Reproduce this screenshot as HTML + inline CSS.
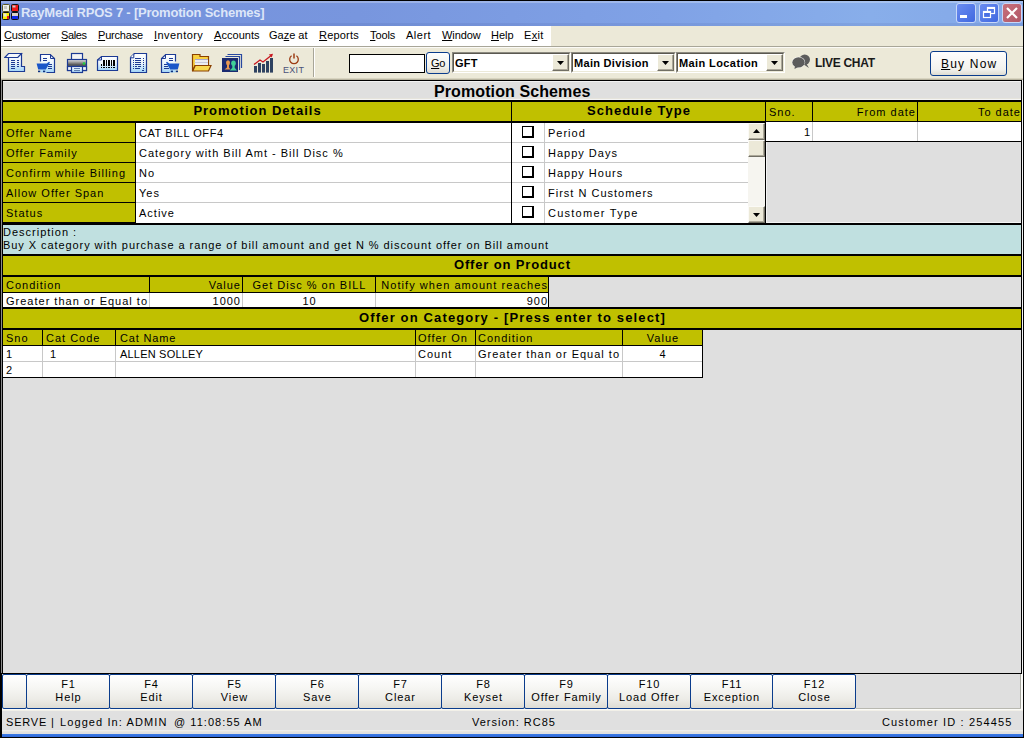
<!DOCTYPE html>
<html><head><meta charset="utf-8">
<style>
*{margin:0;padding:0;box-sizing:border-box}
html,body{width:1024px;height:738px;overflow:hidden;background:#000;font-family:"Liberation Sans",sans-serif;color:#000}
.a{position:absolute}
.t{position:absolute;white-space:nowrap}
u{text-decoration:underline;text-underline-offset:1px}
</style></head><body>
<div class="a" style="left:0px;top:0px;width:1024px;height:738px;background:#000;"></div>
<div class="a" style="left:1px;top:1px;width:1022px;height:25px;background:linear-gradient(90deg,#7490dc 0%,#7896de 35%,#80a2e6 65%,#88aeea 85%,#84a8e8 100%);"></div>
<div class="a" style="left:1px;top:1px;width:1022px;height:2px;background:rgba(255,255,255,0.25);"></div>
<div class="a" style="left:1px;top:23px;width:1022px;height:3px;background:rgba(0,0,60,0.06);"></div>
<svg class="a" style="left:1px;top:3px" width="19" height="18" viewBox="0 0 19 18">
<rect x="1.5" y="1.5" width="7" height="7" rx="1" fill="#f0f0e8" stroke="#5a5620"/><rect x="3" y="3" width="3" height="3" fill="#c8c8c0"/>
<rect x="10.5" y="1.5" width="7" height="7" rx="1" fill="#f01818" stroke="#101010"/><rect x="11.5" y="2.5" width="3" height="2" fill="#c8c8c8"/>
<rect x="1.5" y="9.5" width="7" height="7" rx="1" fill="#f8f000" stroke="#101010"/><rect x="2.5" y="10.5" width="3" height="3" fill="#e8e8e0"/><rect x="6" y="13" width="2" height="3" fill="#e02020"/>
<rect x="10.5" y="9.5" width="7" height="7" rx="1" fill="#1028e8" stroke="#101010"/><rect x="11" y="10" width="6" height="3" fill="#d8d0c8"/>
</svg>
<div class="a" style="left:956px;top:3px;width:20px;height:20px;border:1px solid #c8d8f8;border-radius:3px;background:linear-gradient(135deg,#6a8cf0,#4068e0)"></div>
<div class="a" style="left:979px;top:3px;width:20px;height:20px;border:1px solid #c8d8f8;border-radius:3px;background:linear-gradient(135deg,#6a8cf0,#4068e0)"></div>
<div class="a" style="left:1002px;top:3px;width:20px;height:20px;border:1px solid #c8d8f8;border-radius:3px;background:linear-gradient(135deg,#c8707c,#b05868)"></div>
<div class="a" style="left:960px;top:15px;width:7px;height:3px;background:#fff"></div>
<svg class="a" style="left:979px;top:3px" width="20" height="20"><rect x="8.5" y="4.5" width="7" height="6" fill="none" stroke="#fff" stroke-width="1.2"/><rect x="8" y="4" width="8" height="2" fill="#fff"/><rect x="4.5" y="8.5" width="7" height="6" fill="#4a70e4" stroke="#fff" stroke-width="1.2"/><rect x="4" y="8" width="8" height="2" fill="#fff"/></svg>
<svg class="a" style="left:1002px;top:3px" width="20" height="20"><path d="M5 5 L15 15 M15 5 L5 15" stroke="#fff" stroke-width="2.2"/></svg>
<div class="a" style="left:1px;top:26px;width:1022px;height:20px;background:#ece9d8;"></div>
<div class="a" style="left:1px;top:26px;width:550px;height:20px;background:#fff;"></div>
<div class="a" style="left:1px;top:46px;width:1022px;height:1px;background:#a8a698;"></div>
<div class="a" style="left:1px;top:47px;width:1022px;height:1px;background:#fbfaf6;"></div>
<div class="a" style="left:1px;top:48px;width:1022px;height:32px;background:#ece9d8;"></div>
<div class="a" style="left:1px;top:78px;width:1022px;height:1px;background:#d8d4c0;"></div>
<div class="a" style="left:1px;top:79px;width:1022px;height:1px;background:#b8b4a0;"></div>
<div class="a" style="left:313px;top:48px;width:1px;height:29px;background:#a8a698;"></div>
<div class="a" style="left:314px;top:48px;width:1px;height:29px;background:#fff;"></div>
<svg class="a" style="left:4px;top:52px" width="22" height="21" viewBox="0 0 22 21"><defs><linearGradient id="gd1" x1="0" y1="0" x2="0" y2="1"><stop offset="0" stop-color="#ffffff"/><stop offset="0.5" stop-color="#eaf4fc"/><stop offset="1" stop-color="#a0d4f8"/></linearGradient></defs>
<path d="M4.5 5.5 L4.5 19.5 L20.5 19.5 L20.5 14.5 L17.5 14.5 L17.5 1.5 Z" fill="url(#gd1)" stroke="#1c3a94" stroke-width="1.2"/>
<path d="M0.8 5.5 L4.5 1.5 L17.5 1.5 L13.8 5.5 Z" fill="#f4f8fc" stroke="#1c3a94" stroke-width="1.2"/>
<path shape-rendering="crispEdges" d="M7 8.5 H11 M13 8.5 H15 M7 10.5 H11 M13 10.5 H15 M7 12.5 H11 M13 12.5 H15 M7 14.5 H11 M13 14.5 H15 M7 16.5 H11" stroke="#1c3a94" stroke-width="1"/>
</svg>
<svg class="a" style="left:34px;top:50px" width="24" height="24" viewBox="0 0 24 24"><defs><linearGradient id="gd2" x1="0" y1="0" x2="0" y2="1"><stop offset="0" stop-color="#ffffff"/><stop offset="0.5" stop-color="#eaf4fc"/><stop offset="1" stop-color="#a0d4f8"/></linearGradient></defs><g >
<path d="M6.5 4.5 H16.3 L20.5 8.5 V22.5 H6.5 Z" fill="url(#gd2)"/>
<path d="M6.5 11.5 V4.5 H16.3 L20.5 8.5 V22.5 H12.5" fill="none" stroke="#1c3a94" stroke-width="1.2"/>
<path d="M16.5 4.5 V8.5 H20.5" fill="none" stroke="#1c3a94" stroke-width="1"/>
<path shape-rendering="crispEdges" d="M9 8.5 H13 M9 10.5 H13 M14 14.5 H18 M14 16.5 H18 M13.5 18.5 H18" stroke="#1c3a94" stroke-width="1"/>
<path d="M2.6 13.4 L12.7 13.4 L15 11.8 L16 12.6 L11.8 19.4 L4.2 19.4 Z" fill="#1a56c8"/>
<rect x="4" y="20.6" width="2.2" height="1.6" fill="#0c3080"/><rect x="9" y="20.6" width="2.2" height="1.6" fill="#0c3080"/>
</g></svg>
<svg class="a" style="left:66px;top:52px" width="22" height="22" viewBox="0 0 22 22">
<defs><linearGradient id="gpr" x1="0" y1="0" x2="0" y2="1"><stop offset="0" stop-color="#e8e8e8"/><stop offset="0.5" stop-color="#505050"/><stop offset="1" stop-color="#b0b0b0"/></linearGradient>
<linearGradient id="gpp" x1="0" y1="0" x2="0" y2="1"><stop offset="0" stop-color="#fff"/><stop offset="1" stop-color="#a8d8f8"/></linearGradient></defs>
<rect x="5.5" y="1.5" width="11" height="7" fill="#f4f4f4" stroke="#1c3a94" stroke-width="1.2"/>
<rect x="1.5" y="7.5" width="19" height="11" fill="url(#gpr)" stroke="#1c3a94" stroke-width="1.2"/>
<rect x="1.5" y="14.5" width="19" height="4" fill="#f0f4f8" stroke="#1c3a94" stroke-width="1.2"/>
<circle cx="18" cy="11.5" r="1.3" fill="#20d040"/>
<rect x="5.5" y="14.5" width="11" height="6" fill="url(#gpp)" stroke="#1c3a94" stroke-width="1.2"/>
<path shape-rendering="crispEdges" d="M8 16.5 H14 M8 18.5 H14" stroke="#6080b0" stroke-width="1"/>
</svg>
<svg class="a" style="left:96px;top:52px" width="24" height="22" viewBox="0 0 24 22"><defs><linearGradient id="gd4" x1="0" y1="0" x2="0" y2="1"><stop offset="0" stop-color="#ffffff"/><stop offset="0.5" stop-color="#eaf4fc"/><stop offset="1" stop-color="#a0d4f8"/></linearGradient></defs>
<path d="M1.5 8 L5.5 4.5 L21.5 4.5 L21.5 18.5 L1.5 18.5 Z" fill="url(#gd4)" stroke="#1c3a94" stroke-width="1.2"/>
<path d="M5.5 4.5 L5.5 8 L1.5 8" fill="none" stroke="#1c3a94" stroke-width="1"/>
<g fill="#000" shape-rendering="crispEdges"><rect x="5" y="12" width="1" height="2"/><rect x="7" y="8" width="2" height="6"/><rect x="10" y="8" width="1" height="6"/><rect x="12" y="8" width="2" height="6"/><rect x="15" y="8" width="1" height="6"/><rect x="17" y="8" width="2" height="6"/>
<rect x="5" y="15" width="1" height="1"/><rect x="7" y="15" width="2" height="1"/><rect x="10" y="15" width="1" height="1"/><rect x="12" y="15" width="2" height="1"/><rect x="15" y="15" width="1" height="1"/><rect x="17" y="15" width="2" height="1"/></g>
</svg>
<svg class="a" style="left:126px;top:50px" width="24" height="24" viewBox="0 0 24 24"><defs><linearGradient id="gd5" x1="0" y1="0" x2="0" y2="1"><stop offset="0" stop-color="#ffffff"/><stop offset="0.5" stop-color="#eaf4fc"/><stop offset="1" stop-color="#a0d4f8"/></linearGradient></defs>
<path d="M4.5 7.5 L8.3 3.5 L20.5 3.5 L20.5 22.5 L4.5 22.5 Z" fill="url(#gd5)" stroke="#1c3a94" stroke-width="1.2"/>
<path d="M7.8 3.8 L7.8 7.8 L4.4 7.8" fill="#fff" stroke="#1c3a94" stroke-width="1"/>
<path shape-rendering="crispEdges" d="M9 8.5 H15 M9 10.5 H15 M9 12.5 H15 M9 14.5 H15 M9 16.5 H11 M12 16.5 H15 M9 18.5 H14 M17 8.5 H18 M17 10.5 H18 M17 12.5 H18 M17 14.5 H18 M17 16.5 H18 M17 18.5 H18 M16 20.5 H18 M7 10.5 H8 M7 12.5 H8 M7 14.5 H8 M7 16.5 H8 M7 18.5 H8" stroke="#1c3a94" stroke-width="1"/>
</svg>
<svg class="a" style="left:158px;top:50px" width="24" height="24" viewBox="0 0 24 24"><defs><linearGradient id="gd6" x1="0" y1="0" x2="0" y2="1"><stop offset="0" stop-color="#ffffff"/><stop offset="0.5" stop-color="#eaf4fc"/><stop offset="1" stop-color="#a0d4f8"/></linearGradient></defs><g transform="translate(24,0) scale(-1,1)">
<path d="M6.5 4.5 H16.3 L20.5 8.5 V22.5 H6.5 Z" fill="url(#gd6)"/>
<path d="M6.5 11.5 V4.5 H16.3 L20.5 8.5 V22.5 H12.5" fill="none" stroke="#1c3a94" stroke-width="1.2"/>
<path d="M16.5 4.5 V8.5 H20.5" fill="none" stroke="#1c3a94" stroke-width="1"/>
<path shape-rendering="crispEdges" d="M9 8.5 H13 M9 10.5 H13 M14 14.5 H18 M14 16.5 H18 M13.5 18.5 H18" stroke="#1c3a94" stroke-width="1"/>
<path d="M2.6 13.4 L12.7 13.4 L15 11.8 L16 12.6 L11.8 19.4 L4.2 19.4 Z" fill="#1a56c8"/>
<rect x="4" y="20.6" width="2.2" height="1.6" fill="#0c3080"/><rect x="9" y="20.6" width="2.2" height="1.6" fill="#0c3080"/>
</g></svg>
<svg class="a" style="left:191px;top:52px" width="22" height="21" viewBox="0 0 22 21">
<path d="M1.5 19 L1.5 2.5 L9 2.5 L9 4.5 L17.5 4.5 L17.5 13.5 L4 13.5 Z" fill="#f8d040" stroke="#8a4000" stroke-width="1.2"/>
<rect x="4" y="7" width="13" height="6.5" fill="#ececf0"/>
<path d="M4 7.5 H17" stroke="#a8a8d0" stroke-width="1"/>
<path d="M3.5 10.5 H17" stroke="#c8c8d8" stroke-width="1"/>
<path d="M1.8 19 L4.2 13.5 L20 13.5 L17.5 19 Z" fill="#f8d850" stroke="#8a4000" stroke-width="1.2"/>
</svg>
<svg class="a" style="left:221px;top:52px" width="22" height="22" viewBox="0 0 22 22">
<path d="M6.5 2.5 H20.5 V16" fill="none" stroke="#2848a0" stroke-width="1.2"/>
<path d="M4.5 4.5 H18.5 V18" fill="none" stroke="#2848a0" stroke-width="1.2"/>
<rect x="1" y="6" width="16" height="14" fill="#1a2a70"/>
<ellipse cx="7" cy="10.8" rx="2" ry="2.6" fill="#e89850"/><path d="M6 13 H8 V15.5 L9.5 17.5 H3.5 L6 15.5 Z" fill="#e89850"/>
<ellipse cx="12.5" cy="11.2" rx="2.3" ry="2.8" fill="#40d098"/><path d="M11.3 13.5 H13.7 V15.8 L16 18.5 H8.8 L11.3 15.8 Z" fill="#40d098"/>
</svg>
<svg class="a" style="left:252px;top:52px" width="22" height="22" viewBox="0 0 22 22">
<g fill="#2e4260"><rect x="2" y="14" width="3" height="6.6"/><rect x="6" y="11" width="3" height="9.6"/><rect x="10" y="12" width="3" height="8.6"/><rect x="14" y="9" width="3" height="11.6"/><rect x="18" y="6" width="3" height="14.6"/></g>
<path d="M2 12.5 L8 8 L11 10 L19.5 3.2" fill="none" stroke="#c81820" stroke-width="1.4"/>
<path d="M21 1.8 L16.8 2.6 L19.8 5.6 Z" fill="#c81820"/>
</svg>
<svg class="a" style="left:286px;top:51px" width="16" height="15" viewBox="0 0 16 15">
<path d="M5.6 4.8 A4.3 4.3 0 1 0 10.4 4.8" fill="none" stroke="#9c3c14" stroke-width="1.3"/>
<path d="M8 2.5 V7.5" stroke="#9c3c14" stroke-width="1.5"/>
</svg>
<div class="a" style="left:349px;top:54px;width:76px;height:19px;background:#fff;border:1px solid #000"></div>
<div class="a" style="left:426px;top:52px;width:24px;height:22px;border:1px solid #0a3c8c;border-radius:3px;background:linear-gradient(#fefefe,#f0f0ea 70%,#dcdad0)"></div>
<div class="a" style="left:452px;top:52px;width:119px;height:21px;background:#fff;border-top:1px solid #8c8a80;border-left:1px solid #8c8a80;border-right:1px solid #fff;border-bottom:1px solid #fff"></div>
<div class="a" style="left:453px;top:53px;width:117px;height:19px;background:#fff;border-top:1px solid #5a5850;border-left:1px solid #5a5850;border-right:1px solid #ece9d8;border-bottom:1px solid #ece9d8"></div>
<div class="a" style="left:552px;top:54px;width:17px;height:17px;background:#ece9d8;border-top:1px solid #fff;border-left:1px solid #fff;border-right:1px solid #716f64;border-bottom:1px solid #716f64;box-shadow:inset -1px -1px 0 #aca899"></div>
<svg class="a" style="left:557px;top:61px" width="8" height="4"><path d="M0 0 H7 L3.5 4 Z" fill="#000"/></svg>
<div class="a" style="left:571px;top:52px;width:105px;height:21px;background:#fff;border-top:1px solid #8c8a80;border-left:1px solid #8c8a80;border-right:1px solid #fff;border-bottom:1px solid #fff"></div>
<div class="a" style="left:572px;top:53px;width:103px;height:19px;background:#fff;border-top:1px solid #5a5850;border-left:1px solid #5a5850;border-right:1px solid #ece9d8;border-bottom:1px solid #ece9d8"></div>
<div class="a" style="left:657px;top:54px;width:17px;height:17px;background:#ece9d8;border-top:1px solid #fff;border-left:1px solid #fff;border-right:1px solid #716f64;border-bottom:1px solid #716f64;box-shadow:inset -1px -1px 0 #aca899"></div>
<svg class="a" style="left:662px;top:61px" width="8" height="4"><path d="M0 0 H7 L3.5 4 Z" fill="#000"/></svg>
<div class="a" style="left:676px;top:52px;width:109px;height:21px;background:#fff;border-top:1px solid #8c8a80;border-left:1px solid #8c8a80;border-right:1px solid #fff;border-bottom:1px solid #fff"></div>
<div class="a" style="left:677px;top:53px;width:107px;height:19px;background:#fff;border-top:1px solid #5a5850;border-left:1px solid #5a5850;border-right:1px solid #ece9d8;border-bottom:1px solid #ece9d8"></div>
<div class="a" style="left:766px;top:54px;width:17px;height:17px;background:#ece9d8;border-top:1px solid #fff;border-left:1px solid #fff;border-right:1px solid #716f64;border-bottom:1px solid #716f64;box-shadow:inset -1px -1px 0 #aca899"></div>
<svg class="a" style="left:771px;top:61px" width="8" height="4"><path d="M0 0 H7 L3.5 4 Z" fill="#000"/></svg>
<svg class="a" style="left:790px;top:52px" width="22" height="18" viewBox="0 0 22 18">
<ellipse cx="14.7" cy="7.6" rx="5.3" ry="5.2" fill="#5c5c5c"/>
<path d="M16 11 L19 16 L13 12 Z" fill="#5c5c5c"/>
<ellipse cx="8.5" cy="10.3" rx="6.6" ry="5.6" fill="#fff" opacity="0.9"/>
<ellipse cx="8.5" cy="10.4" rx="6.2" ry="5.2" fill="#5c5c5c"/>
<path d="M5 13.5 L4.5 17 L9 14.5 Z" fill="#5c5c5c"/>
</svg>
<div class="a" style="left:930px;top:51px;width:77px;height:25px;border:1px solid #0a3c8c;border-radius:3px;background:linear-gradient(#fefefe,#f2f2ee 75%,#dedcd2)"></div>
<div class="a" style="left:1px;top:80px;width:1px;height:593px;background:#8a8a8a;"></div>
<div class="a" style="left:2px;top:80px;width:1020px;height:594px;background:#dfdfdf;border:1px solid #000"></div>
<div class="a" style="left:1022px;top:80px;width:1px;height:629px;background:#f4f4f4;"></div>
<div class="a" style="left:3px;top:81px;width:1018px;height:1px;background:#f2f2f2;"></div>
<div class="a" style="left:3px;top:98px;width:1018px;height:1px;background:#e6e4dc;"></div>
<div class="a" style="left:3px;top:99px;width:1018px;height:1px;background:#f4f4f4;"></div>
<div class="a" style="left:3px;top:100px;width:1018px;height:2px;background:#000;"></div>
<div class="a" style="left:3px;top:102px;width:1018px;height:19px;background:#c0c000;"></div>
<div class="a" style="left:3px;top:121px;width:1018px;height:2px;background:#000;"></div>
<div class="a" style="left:3px;top:123px;width:132px;height:100px;background:#c0c000;"></div>
<div class="a" style="left:135px;top:123px;width:1px;height:100px;background:#000;"></div>
<div class="a" style="left:136px;top:123px;width:375px;height:100px;background:#fff;"></div>
<div class="a" style="left:511px;top:100px;width:1px;height:123px;background:#000;"></div>
<div class="a" style="left:512px;top:123px;width:236px;height:100px;background:#fff;"></div>
<div class="a" style="left:765px;top:100px;width:1px;height:125px;background:#000;"></div>
<div class="a" style="left:3px;top:142px;width:132px;height:1px;background:#000;"></div>
<div class="a" style="left:136px;top:142px;width:375px;height:1px;background:#c8c8c8;"></div>
<div class="a" style="left:512px;top:142px;width:236px;height:1px;background:#c8c8c8;"></div>
<div class="a" style="left:522px;top:126px;width:12px;height:12px;background:#fff;border-top:1px solid #000;border-left:1px solid #000;border-right:2px solid #000;border-bottom:2px solid #000"></div>
<div class="a" style="left:3px;top:162px;width:132px;height:1px;background:#000;"></div>
<div class="a" style="left:136px;top:162px;width:375px;height:1px;background:#c8c8c8;"></div>
<div class="a" style="left:512px;top:162px;width:236px;height:1px;background:#c8c8c8;"></div>
<div class="a" style="left:522px;top:146px;width:12px;height:12px;background:#fff;border-top:1px solid #000;border-left:1px solid #000;border-right:2px solid #000;border-bottom:2px solid #000"></div>
<div class="a" style="left:3px;top:182px;width:132px;height:1px;background:#000;"></div>
<div class="a" style="left:136px;top:182px;width:375px;height:1px;background:#c8c8c8;"></div>
<div class="a" style="left:512px;top:182px;width:236px;height:1px;background:#c8c8c8;"></div>
<div class="a" style="left:522px;top:166px;width:12px;height:12px;background:#fff;border-top:1px solid #000;border-left:1px solid #000;border-right:2px solid #000;border-bottom:2px solid #000"></div>
<div class="a" style="left:3px;top:202px;width:132px;height:1px;background:#000;"></div>
<div class="a" style="left:136px;top:202px;width:375px;height:1px;background:#c8c8c8;"></div>
<div class="a" style="left:512px;top:202px;width:236px;height:1px;background:#c8c8c8;"></div>
<div class="a" style="left:522px;top:186px;width:12px;height:12px;background:#fff;border-top:1px solid #000;border-left:1px solid #000;border-right:2px solid #000;border-bottom:2px solid #000"></div>
<div class="a" style="left:522px;top:206px;width:12px;height:12px;background:#fff;border-top:1px solid #000;border-left:1px solid #000;border-right:2px solid #000;border-bottom:2px solid #000"></div>
<div class="a" style="left:544px;top:123px;width:1px;height:100px;background:#c8c8c8;"></div>
<div class="a" style="left:3px;top:222px;width:132px;height:1px;background:#000;"></div>
<div class="a" style="left:748px;top:123px;width:17px;height:100px;background:#f6f5f0;"></div>
<div class="a" style="left:748px;top:123px;width:17px;height:17px;background:#ece9d8;border-top:1px solid #fbfaf6;border-left:1px solid #fbfaf6;border-right:1px solid #716f64;border-bottom:1px solid #716f64;box-shadow:inset -1px -1px 0 #aca899"></div>
<div class="a" style="left:748px;top:140px;width:17px;height:17px;background:#ece9d8;border-top:1px solid #fbfaf6;border-left:1px solid #fbfaf6;border-right:1px solid #716f64;border-bottom:1px solid #716f64;box-shadow:inset -1px -1px 0 #aca899"></div>
<div class="a" style="left:748px;top:206px;width:17px;height:17px;background:#ece9d8;border-top:1px solid #fbfaf6;border-left:1px solid #fbfaf6;border-right:1px solid #716f64;border-bottom:1px solid #716f64;box-shadow:inset -1px -1px 0 #aca899"></div>
<svg class="a" style="left:753px;top:129px" width="8" height="4"><path d="M3.5 0 L7 4 H0 Z" fill="#000"/></svg>
<svg class="a" style="left:753px;top:213px" width="8" height="4"><path d="M0 0 H7 L3.5 4 Z" fill="#000"/></svg>
<div class="a" style="left:766px;top:122px;width:255px;height:19px;background:#fff;"></div>
<div class="a" style="left:812px;top:100px;width:1px;height:41px;background:#000;"></div>
<div class="a" style="left:917px;top:100px;width:1px;height:41px;background:#000;"></div>
<div class="a" style="left:812px;top:122px;width:1px;height:19px;background:#c8c8c8;"></div>
<div class="a" style="left:917px;top:122px;width:1px;height:19px;background:#c8c8c8;"></div>
<div class="a" style="left:766px;top:141px;width:255px;height:1px;background:#000;"></div>
<div class="a" style="left:766px;top:142px;width:1px;height:81px;background:#f4f4f4;"></div>
<div class="a" style="left:766px;top:222px;width:255px;height:1px;background:#f4f4f4;"></div>
<div class="a" style="left:3px;top:223px;width:1018px;height:2px;background:#000;"></div>
<div class="a" style="left:3px;top:225px;width:1018px;height:29px;background:#c0e0e0;"></div>
<div class="a" style="left:3px;top:254px;width:1018px;height:2px;background:#000;"></div>
<div class="a" style="left:3px;top:256px;width:1018px;height:19px;background:#c0c000;"></div>
<div class="a" style="left:3px;top:275px;width:1018px;height:2px;background:#000;"></div>
<div class="a" style="left:3px;top:277px;width:545px;height:15px;background:#c0c000;"></div>
<div class="a" style="left:3px;top:292px;width:546px;height:1px;background:#000;"></div>
<div class="a" style="left:3px;top:293px;width:545px;height:14px;background:#fff;"></div>
<div class="a" style="left:548px;top:277px;width:1px;height:30px;background:#000;"></div>
<div class="a" style="left:149px;top:277px;width:1px;height:15px;background:#000;"></div>
<div class="a" style="left:149px;top:293px;width:1px;height:14px;background:#c8c8c8;"></div>
<div class="a" style="left:242px;top:277px;width:1px;height:15px;background:#000;"></div>
<div class="a" style="left:242px;top:293px;width:1px;height:14px;background:#c8c8c8;"></div>
<div class="a" style="left:375px;top:277px;width:1px;height:15px;background:#000;"></div>
<div class="a" style="left:375px;top:293px;width:1px;height:14px;background:#c8c8c8;"></div>
<div class="a" style="left:3px;top:307px;width:1018px;height:2px;background:#000;"></div>
<div class="a" style="left:3px;top:309px;width:1018px;height:19px;background:#c0c000;"></div>
<div class="a" style="left:3px;top:328px;width:1018px;height:2px;background:#000;"></div>
<div class="a" style="left:3px;top:330px;width:699px;height:15px;background:#c0c000;"></div>
<div class="a" style="left:3px;top:345px;width:700px;height:1px;background:#000;"></div>
<div class="a" style="left:3px;top:346px;width:699px;height:31px;background:#fff;"></div>
<div class="a" style="left:3px;top:361px;width:699px;height:1px;background:#c8c8c8;"></div>
<div class="a" style="left:3px;top:377px;width:700px;height:1px;background:#000;"></div>
<div class="a" style="left:702px;top:330px;width:1px;height:48px;background:#000;"></div>
<div class="a" style="left:42px;top:330px;width:1px;height:15px;background:#000;"></div>
<div class="a" style="left:42px;top:346px;width:1px;height:31px;background:#c8c8c8;"></div>
<div class="a" style="left:115px;top:330px;width:1px;height:15px;background:#000;"></div>
<div class="a" style="left:115px;top:346px;width:1px;height:31px;background:#c8c8c8;"></div>
<div class="a" style="left:415px;top:330px;width:1px;height:15px;background:#000;"></div>
<div class="a" style="left:415px;top:346px;width:1px;height:31px;background:#c8c8c8;"></div>
<div class="a" style="left:475px;top:330px;width:1px;height:15px;background:#000;"></div>
<div class="a" style="left:475px;top:346px;width:1px;height:31px;background:#c8c8c8;"></div>
<div class="a" style="left:622px;top:330px;width:1px;height:15px;background:#000;"></div>
<div class="a" style="left:622px;top:346px;width:1px;height:31px;background:#c8c8c8;"></div>
<div class="a" style="left:1px;top:674px;width:1022px;height:35px;background:#dfdfdf;"></div>
<div class="a" style="left:1020px;top:674px;width:1px;height:35px;background:#a8a8a0;"></div>
<div class="a" style="left:1021px;top:674px;width:2px;height:35px;background:#fbfbf8;"></div>
<div class="a" style="left:856px;top:708px;width:165px;height:1px;background:#b8b8b0;"></div>
<div class="a" style="left:2px;top:674px;width:25px;height:35px;border:1px solid #0a3c8c;border-radius:2px;background:linear-gradient(#ffffff,#f6f6f3 40%,#ecebe6 75%,#dedcd4)"></div>
<div class="a" style="left:26px;top:674px;width:84px;height:35px;border:1px solid #0a3c8c;border-radius:2px;background:linear-gradient(#ffffff,#f6f6f3 40%,#ecebe6 75%,#dedcd4)"></div>
<div class="a" style="left:109px;top:674px;width:84px;height:35px;border:1px solid #0a3c8c;border-radius:2px;background:linear-gradient(#ffffff,#f6f6f3 40%,#ecebe6 75%,#dedcd4)"></div>
<div class="a" style="left:192px;top:674px;width:84px;height:35px;border:1px solid #0a3c8c;border-radius:2px;background:linear-gradient(#ffffff,#f6f6f3 40%,#ecebe6 75%,#dedcd4)"></div>
<div class="a" style="left:275px;top:674px;width:84px;height:35px;border:1px solid #0a3c8c;border-radius:2px;background:linear-gradient(#ffffff,#f6f6f3 40%,#ecebe6 75%,#dedcd4)"></div>
<div class="a" style="left:358px;top:674px;width:84px;height:35px;border:1px solid #0a3c8c;border-radius:2px;background:linear-gradient(#ffffff,#f6f6f3 40%,#ecebe6 75%,#dedcd4)"></div>
<div class="a" style="left:441px;top:674px;width:84px;height:35px;border:1px solid #0a3c8c;border-radius:2px;background:linear-gradient(#ffffff,#f6f6f3 40%,#ecebe6 75%,#dedcd4)"></div>
<div class="a" style="left:524px;top:674px;width:84px;height:35px;border:1px solid #0a3c8c;border-radius:2px;background:linear-gradient(#ffffff,#f6f6f3 40%,#ecebe6 75%,#dedcd4)"></div>
<div class="a" style="left:607px;top:674px;width:84px;height:35px;border:1px solid #0a3c8c;border-radius:2px;background:linear-gradient(#ffffff,#f6f6f3 40%,#ecebe6 75%,#dedcd4)"></div>
<div class="a" style="left:690px;top:674px;width:83px;height:35px;border:1px solid #0a3c8c;border-radius:2px;background:linear-gradient(#ffffff,#f6f6f3 40%,#ecebe6 75%,#dedcd4)"></div>
<div class="a" style="left:772px;top:674px;width:84px;height:35px;border:1px solid #0a3c8c;border-radius:2px;background:linear-gradient(#ffffff,#f6f6f3 40%,#ecebe6 75%,#dedcd4)"></div>
<div class="a" style="left:1px;top:709px;width:1022px;height:28px;background:#e0e0e0;"></div>
<div class="a" style="left:1px;top:709px;width:1022px;height:1px;background:#fbfbf8;"></div>
<div class="a" style="left:1px;top:710px;width:1022px;height:1px;background:#f2f0e8;"></div>
<div class="a" style="left:1px;top:730px;width:1022px;height:1px;background:#ececec;"></div>
<div class="a" style="left:1px;top:731px;width:1022px;height:1px;background:#e8e6de;"></div>
<div class="a" style="left:1px;top:734px;width:1022px;height:3px;background:linear-gradient(#3a7ae4,#3068d8);"></div>
<div class="a" style="left:1px;top:674px;width:1px;height:64px;background:#000;"></div><div><div class="t" style="left:21px;top:6px;font-size:13px;line-height:13px;letter-spacing:-0.2px;font-weight:bold;color:#dde6f8;">RayMedi RPOS 7 - [Promotion Schemes]</div>
<div class="t" style="left:4px;top:30px;font-size:11px;line-height:11px;letter-spacing:-0.2px;color:#000;"><u>C</u>ustomer</div>
<div class="t" style="left:61px;top:30px;font-size:11px;line-height:11px;letter-spacing:-0.4px;color:#000;"><u>S</u>ales</div>
<div class="t" style="left:98px;top:30px;font-size:11px;line-height:11px;letter-spacing:-0.2px;color:#000;"><u>P</u>urchase</div>
<div class="t" style="left:154px;top:30px;font-size:11px;line-height:11px;letter-spacing:0.45px;color:#000;"><u>I</u>nventory</div>
<div class="t" style="left:214px;top:30px;font-size:11px;line-height:11px;letter-spacing:0.05px;color:#000;"><u>A</u>ccounts</div>
<div class="t" style="left:269px;top:30px;font-size:11px;line-height:11px;letter-spacing:0.0px;color:#000;">Ga<u>z</u>e at</div>
<div class="t" style="left:319px;top:30px;font-size:11px;line-height:11px;letter-spacing:0.2px;color:#000;"><u>R</u>eports</div>
<div class="t" style="left:370px;top:30px;font-size:11px;line-height:11px;letter-spacing:-0.1px;color:#000;"><u>T</u>ools</div>
<div class="t" style="left:406px;top:30px;font-size:11px;line-height:11px;letter-spacing:0.5px;color:#000;">Alert</div>
<div class="t" style="left:442px;top:30px;font-size:11px;line-height:11px;letter-spacing:-0.1px;color:#000;"><u>W</u>indow</div>
<div class="t" style="left:491px;top:30px;font-size:11px;line-height:11px;letter-spacing:0.0px;color:#000;"><u>H</u>elp</div>
<div class="t" style="left:524px;top:30px;font-size:11px;line-height:11px;letter-spacing:0.3px;color:#000;">E<u>x</u>it</div>
<div class="t" style="left:283px;top:66px;font-size:9px;line-height:9px;letter-spacing:0.3px;color:#4a5278;">EXIT</div>
<div class="t" style="left:431px;top:58px;font-size:11px;line-height:11px;letter-spacing:-0.3px;color:#000;"><u>G</u>o</div>
<div class="t" style="left:455px;top:58px;font-size:11px;line-height:11px;letter-spacing:0.2px;font-weight:bold;color:#000;">GFT</div>
<div class="t" style="left:574px;top:58px;font-size:11px;line-height:11px;letter-spacing:0.3px;font-weight:bold;color:#000;">Main Division</div>
<div class="t" style="left:679px;top:58px;font-size:11px;line-height:11px;letter-spacing:0.4px;font-weight:bold;color:#000;">Main Location</div>
<div class="t" style="left:815px;top:57px;font-size:12px;line-height:12px;letter-spacing:-0.3px;font-weight:bold;color:#1a1a1a;">LIVE CHAT</div>
<div class="t" style="left:941px;top:58px;font-size:12px;line-height:12px;letter-spacing:1.2px;color:#000;"><u>B</u>uy Now</div>
<div class="t" style="left:434px;top:84px;font-size:16px;line-height:16px;letter-spacing:0.1px;font-weight:bold;color:#000;">Promotion Schemes</div>
<div class="t" style="left:3px;top:104px;width:508px;text-align:center;font-size:13px;line-height:13px;letter-spacing:1.0px;font-weight:bold;color:#000;padding-left:1.0px;">Promotion Details</div>
<div class="t" style="left:512px;top:104px;width:253px;text-align:center;font-size:13px;line-height:13px;letter-spacing:1.0px;font-weight:bold;color:#000;padding-left:1.0px;">Schedule Type</div>
<div class="t" style="left:6px;top:128px;font-size:11px;line-height:11px;letter-spacing:1.0px;color:#000;">Offer Name</div>
<div class="t" style="left:139px;top:128px;font-size:11px;line-height:11px;letter-spacing:0.55px;color:#000;">CAT BILL OFF4</div>
<div class="t" style="left:548px;top:128px;font-size:11px;line-height:11px;letter-spacing:1.0px;color:#000;">Period</div>
<div class="t" style="left:6px;top:148px;font-size:11px;line-height:11px;letter-spacing:1.0px;color:#000;">Offer Family</div>
<div class="t" style="left:139px;top:148px;font-size:11px;line-height:11px;letter-spacing:1.0px;color:#000;">Category with Bill Amt - Bill Disc %</div>
<div class="t" style="left:548px;top:148px;font-size:11px;line-height:11px;letter-spacing:1.0px;color:#000;">Happy Days</div>
<div class="t" style="left:6px;top:168px;font-size:11px;line-height:11px;letter-spacing:1.0px;color:#000;">Confirm while Billing</div>
<div class="t" style="left:139px;top:168px;font-size:11px;line-height:11px;letter-spacing:1.0px;color:#000;">No</div>
<div class="t" style="left:548px;top:168px;font-size:11px;line-height:11px;letter-spacing:1.0px;color:#000;">Happy Hours</div>
<div class="t" style="left:6px;top:188px;font-size:11px;line-height:11px;letter-spacing:1.0px;color:#000;">Allow Offer Span</div>
<div class="t" style="left:139px;top:188px;font-size:11px;line-height:11px;letter-spacing:1.0px;color:#000;">Yes</div>
<div class="t" style="left:548px;top:188px;font-size:11px;line-height:11px;letter-spacing:1.0px;color:#000;">First N Customers</div>
<div class="t" style="left:6px;top:208px;font-size:11px;line-height:11px;letter-spacing:1.0px;color:#000;">Status</div>
<div class="t" style="left:139px;top:208px;font-size:11px;line-height:11px;letter-spacing:1.0px;color:#000;">Active</div>
<div class="t" style="left:548px;top:208px;font-size:11px;line-height:11px;letter-spacing:1.25px;color:#000;">Customer Type</div>
<div class="t" style="left:769px;top:107px;font-size:11px;line-height:11px;letter-spacing:1.0px;color:#000;">Sno.</div>
<div class="t" style="left:516px;top:107px;width:400px;text-align:right;font-size:11px;line-height:11px;letter-spacing:1.0px;color:#000">From date</div>
<div class="t" style="left:621px;top:107px;width:400px;text-align:right;font-size:11px;line-height:11px;letter-spacing:1.0px;color:#000">To date</div>
<div class="t" style="left:411px;top:127px;width:400px;text-align:right;font-size:11px;line-height:11px;letter-spacing:1.0px;color:#000">1</div>
<div class="t" style="left:3px;top:227px;font-size:11px;line-height:11px;letter-spacing:1.0px;color:#000;">Description :</div>
<div class="t" style="left:3px;top:240px;font-size:11px;line-height:11px;letter-spacing:0.93px;color:#000;">Buy X category with purchase a range of bill amount and get N % discount offer on Bill amount</div>
<div class="t" style="left:3px;top:258px;width:1018px;text-align:center;font-size:13px;line-height:13px;letter-spacing:0.85px;font-weight:bold;color:#000;padding-left:0.85px;">Offer on Product</div>
<div class="t" style="left:6px;top:280px;font-size:11px;line-height:11px;letter-spacing:1.0px;color:#000;">Condition</div>
<div class="t" style="left:-159px;top:280px;width:400px;text-align:right;font-size:11px;line-height:11px;letter-spacing:1.0px;color:#000">Value</div>
<div class="t" style="left:243px;top:280px;width:132px;text-align:center;font-size:11px;line-height:11px;letter-spacing:1.0px;color:#000;padding-left:1.0px;">Get Disc % on BILL</div>
<div class="t" style="left:148px;top:280px;width:400px;text-align:right;font-size:11px;line-height:11px;letter-spacing:1.05px;color:#000">Notify when amount reaches</div>
<div class="t" style="left:6px;top:296px;font-size:11px;line-height:11px;letter-spacing:1.0px;color:#000;">Greater than or Equal to</div>
<div class="t" style="left:-159px;top:296px;width:400px;text-align:right;font-size:11px;line-height:11px;letter-spacing:1.0px;color:#000">1000</div>
<div class="t" style="left:243px;top:296px;width:132px;text-align:center;font-size:11px;line-height:11px;letter-spacing:1.0px;color:#000;padding-left:1.0px;">10</div>
<div class="t" style="left:148px;top:296px;width:400px;text-align:right;font-size:11px;line-height:11px;letter-spacing:1.0px;color:#000">900</div>
<div class="t" style="left:3px;top:311px;width:1018px;text-align:center;font-size:13px;line-height:13px;letter-spacing:1.14px;font-weight:bold;color:#000;padding-left:1.14px;">Offer on Category - [Press enter to select]</div>
<div class="t" style="left:6px;top:333px;font-size:11px;line-height:11px;letter-spacing:1.0px;color:#000;">Sno</div>
<div class="t" style="left:46px;top:333px;font-size:11px;line-height:11px;letter-spacing:1.0px;color:#000;">Cat Code</div>
<div class="t" style="left:120px;top:333px;font-size:11px;line-height:11px;letter-spacing:0.85px;color:#000;">Cat Name</div>
<div class="t" style="left:418px;top:333px;font-size:11px;line-height:11px;letter-spacing:1.0px;color:#000;">Offer On</div>
<div class="t" style="left:478px;top:333px;font-size:11px;line-height:11px;letter-spacing:1.0px;color:#000;">Condition</div>
<div class="t" style="left:623px;top:333px;width:79px;text-align:center;font-size:11px;line-height:11px;letter-spacing:1.0px;color:#000;padding-left:1.0px;">Value</div>
<div class="t" style="left:6px;top:349px;font-size:11px;line-height:11px;letter-spacing:1.0px;color:#000;">1</div>
<div class="t" style="left:50px;top:349px;font-size:11px;line-height:11px;letter-spacing:1.0px;color:#000;">1</div>
<div class="t" style="left:120px;top:349px;font-size:11px;line-height:11px;letter-spacing:0.2px;color:#000;">ALLEN SOLLEY</div>
<div class="t" style="left:418px;top:349px;font-size:11px;line-height:11px;letter-spacing:1.0px;color:#000;">Count</div>
<div class="t" style="left:478px;top:349px;font-size:11px;line-height:11px;letter-spacing:1.0px;color:#000;">Greater than or Equal to</div>
<div class="t" style="left:623px;top:349px;width:79px;text-align:center;font-size:11px;line-height:11px;letter-spacing:1.0px;color:#000;padding-left:1.0px;">4</div>
<div class="t" style="left:6px;top:365px;font-size:11px;line-height:11px;letter-spacing:1.0px;color:#000;">2</div>
<div class="t" style="left:27px;top:679px;width:82px;text-align:center;font-size:11px;line-height:11px;letter-spacing:0.8px;color:#000;padding-left:0.8px;">F1</div>
<div class="t" style="left:27px;top:692px;width:82px;text-align:center;font-size:11px;line-height:11px;letter-spacing:0.9px;color:#000;padding-left:0.9px;">Help</div>
<div class="t" style="left:110px;top:679px;width:82px;text-align:center;font-size:11px;line-height:11px;letter-spacing:0.8px;color:#000;padding-left:0.8px;">F4</div>
<div class="t" style="left:110px;top:692px;width:82px;text-align:center;font-size:11px;line-height:11px;letter-spacing:0.9px;color:#000;padding-left:0.9px;">Edit</div>
<div class="t" style="left:193px;top:679px;width:82px;text-align:center;font-size:11px;line-height:11px;letter-spacing:0.8px;color:#000;padding-left:0.8px;">F5</div>
<div class="t" style="left:193px;top:692px;width:82px;text-align:center;font-size:11px;line-height:11px;letter-spacing:0.9px;color:#000;padding-left:0.9px;">View</div>
<div class="t" style="left:276px;top:679px;width:82px;text-align:center;font-size:11px;line-height:11px;letter-spacing:0.8px;color:#000;padding-left:0.8px;">F6</div>
<div class="t" style="left:276px;top:692px;width:82px;text-align:center;font-size:11px;line-height:11px;letter-spacing:0.9px;color:#000;padding-left:0.9px;">Save</div>
<div class="t" style="left:359px;top:679px;width:82px;text-align:center;font-size:11px;line-height:11px;letter-spacing:0.8px;color:#000;padding-left:0.8px;">F7</div>
<div class="t" style="left:359px;top:692px;width:82px;text-align:center;font-size:11px;line-height:11px;letter-spacing:0.9px;color:#000;padding-left:0.9px;">Clear</div>
<div class="t" style="left:442px;top:679px;width:82px;text-align:center;font-size:11px;line-height:11px;letter-spacing:0.8px;color:#000;padding-left:0.8px;">F8</div>
<div class="t" style="left:442px;top:692px;width:82px;text-align:center;font-size:11px;line-height:11px;letter-spacing:0.9px;color:#000;padding-left:0.9px;">Keyset</div>
<div class="t" style="left:525px;top:679px;width:82px;text-align:center;font-size:11px;line-height:11px;letter-spacing:0.8px;color:#000;padding-left:0.8px;">F9</div>
<div class="t" style="left:525px;top:692px;width:82px;text-align:center;font-size:11px;line-height:11px;letter-spacing:0.9px;color:#000;padding-left:0.9px;">Offer Family</div>
<div class="t" style="left:608px;top:679px;width:82px;text-align:center;font-size:11px;line-height:11px;letter-spacing:0.8px;color:#000;padding-left:0.8px;">F10</div>
<div class="t" style="left:608px;top:692px;width:82px;text-align:center;font-size:11px;line-height:11px;letter-spacing:0.9px;color:#000;padding-left:0.9px;">Load Offer</div>
<div class="t" style="left:691px;top:679px;width:81px;text-align:center;font-size:11px;line-height:11px;letter-spacing:0.8px;color:#000;padding-left:0.8px;">F11</div>
<div class="t" style="left:691px;top:692px;width:81px;text-align:center;font-size:11px;line-height:11px;letter-spacing:0.9px;color:#000;padding-left:0.9px;">Exception</div>
<div class="t" style="left:773px;top:679px;width:82px;text-align:center;font-size:11px;line-height:11px;letter-spacing:0.8px;color:#000;padding-left:0.8px;">F12</div>
<div class="t" style="left:773px;top:692px;width:82px;text-align:center;font-size:11px;line-height:11px;letter-spacing:0.9px;color:#000;padding-left:0.9px;">Close</div>
<div class="t" style="left:6px;top:717px;font-size:11px;line-height:11px;letter-spacing:0.8px;color:#000;">SERVE |</div>
<div class="t" style="left:60px;top:717px;font-size:11px;line-height:11px;letter-spacing:1.1px;color:#000;">Logged In: ADMIN</div>
<div class="t" style="left:174px;top:717px;font-size:11px;line-height:11px;letter-spacing:1.05px;color:#000;">@ 11:08:55 AM</div>
<div class="t" style="left:472px;top:717px;font-size:11px;line-height:11px;letter-spacing:1.0px;color:#000;">Version: RC85</div>
<div class="t" style="left:882px;top:717px;font-size:11px;line-height:11px;letter-spacing:1.15px;color:#000;">Customer ID : 254455</div></div>
</body></html>
